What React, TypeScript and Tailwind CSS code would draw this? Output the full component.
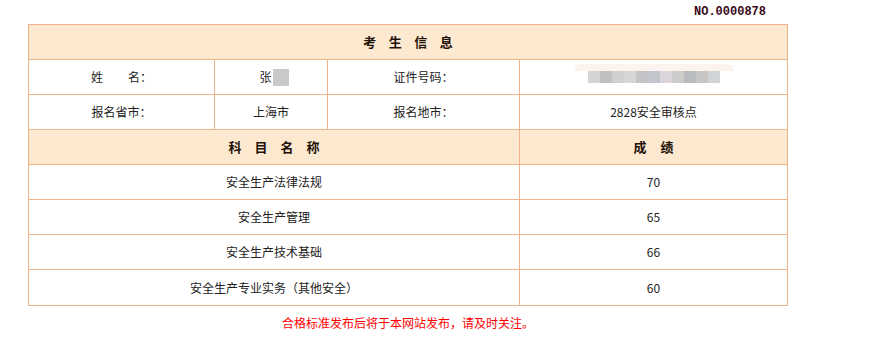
import React from "react";

const font = { fontFamily: '"Noto Sans CJK SC", "Noto Sans", sans-serif' };

const blocks = [
  "#d4d4d4", "#bfc0c2", "#cfcfcf", "#d6d6d6", "#c4c3c7", "#c3c5cd",
  "#dcd6dc", "#ccccca", "#b9bcbe", "#c8c6c4", "#d0d4d6",
];

const subjects: [string, string][] = [
  ["安全生产法律法规", "70"],
  ["安全生产管理", "65"],
  ["安全生产技术基础", "66"],
  ["安全生产专业实务（其他安全）", "60"],
];

function HeaderText({ chars, gap }: { chars: string[]; gap: string }) {
  return (
    <div className={`flex items-center justify-center font-bold text-[13px] text-[#1f1208] ${gap}`}>
      {chars.map((c) => (
        <span key={c}>{c}</span>
      ))}
    </div>
  );
}

export default function App() {
  return (
    <div className="w-[876px] h-[346px] bg-white" style={font}>
      <div className="ml-[28px] w-[760px]">
        <div className="h-[24px] flex items-center justify-end pr-[22px]">
          <span
            className="font-bold text-[12px] leading-[12px] text-[#3a0a1a]"
            style={{ fontFamily: '"Liberation Mono", monospace' }}
          >
            NO.0000878
          </span>
        </div>

        <div className="border border-[#efb48a] text-[12px] text-[#222]">
          {/* 考生信息 header */}
          <div className="h-[35px] border-b border-[#efb48a] bg-[#fde9cf] flex items-center justify-center">
            <HeaderText chars={["考", "生", "信", "息"]} gap="gap-[12.5px]" />
          </div>

          {/* row 1 */}
          <div className="h-[35px] border-b border-[#efb48a] flex">
            <div className="w-[186px] border-r border-[#efb48a] flex items-center justify-center">
              <span>姓</span>
              <span className="w-[25px]" />
              <span>名：</span>
            </div>
            <div className="w-[113px] border-r border-[#efb48a] flex items-center justify-center pl-[6px]">
              <span>张</span>
              <span className="w-[16px] h-[17px] bg-[#c9c9cc] ml-[1px]" />
            </div>
            <div className="w-[192px] border-r border-[#efb48a] flex items-center justify-center">
              证件号码：
            </div>
            <div className="flex-1 flex items-center justify-center">
              <div className="flex flex-col items-center pb-[8px]">
                <div className="h-[7px] w-[160px] rounded-t-full bg-[#fdf3ee]" />
                <div className="flex">
                  {blocks.map((c, i) => (
                    <div key={i} className="w-[12px] h-[12px]" style={{ backgroundColor: c }} />
                  ))}
                </div>
              </div>
            </div>
          </div>

          {/* row 2 */}
          <div className="h-[35px] border-b border-[#efb48a] flex">
            <div className="w-[186px] border-r border-[#efb48a] flex items-center justify-center">
              报名省市：
            </div>
            <div className="w-[113px] border-r border-[#efb48a] flex items-center justify-center">
              上海市
            </div>
            <div className="w-[192px] border-r border-[#efb48a] flex items-center justify-center">
              报名地市：
            </div>
            <div className="flex-1 flex items-center justify-center">2828安全审核点</div>
          </div>

          {/* subjects header */}
          <div className="h-[35px] border-b border-[#efb48a] bg-[#fde9cf] flex">
            <div className="w-[491px] border-r border-[#efb48a] flex items-center justify-center">
              <HeaderText chars={["科", "目", "名", "称"]} gap="gap-[13px]" />
            </div>
            <div className="flex-1 flex items-center justify-center">
              <HeaderText chars={["成", "绩"]} gap="gap-[14px]" />
            </div>
          </div>

          {subjects.map(([name, score], i) => (
            <div
              key={name}
              className={`h-[35px] flex ${i < subjects.length - 1 ? "border-b border-[#efb48a]" : "h-[34px]"}`}
            >
              <div className="w-[491px] border-r border-[#efb48a] flex items-center justify-center">
                {name}
              </div>
              <div className="flex-1 flex items-center justify-center">{score}</div>
            </div>
          ))}
        </div>

        <div className="mt-[10px] text-center text-[12px] leading-[14px] text-[#ff0000]">
          合格标准发布后将于本网站发布，请及时关注。
        </div>
      </div>
    </div>
  );
}
